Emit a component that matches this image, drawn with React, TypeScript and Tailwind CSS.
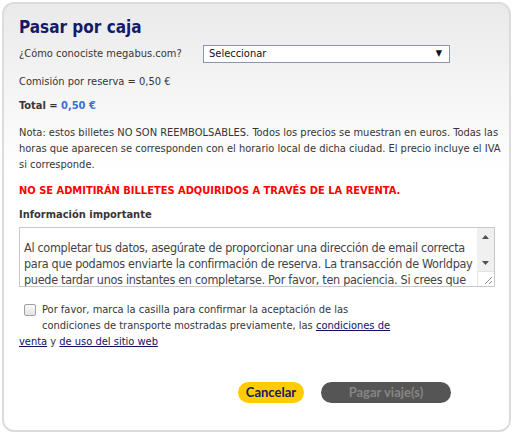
import React from "react";

export default function App() {
  return (
    <div className="w-[513px] h-[434px] bg-white p-[2px] font-['DejaVu_Sans_Condensed','DejaVu_Sans',sans-serif] font-stretch-condensed text-[11px] text-[#363636]">
      <div className="relative w-[509px] h-[430px] rounded-[12px] border-2 border-[#dcdcdc] bg-gradient-to-b from-[#eaeaea] via-white via-40% to-white overflow-hidden flex flex-col">
        <div className="flex flex-col px-[15px] pt-[13px]">
          <h1 className="text-[17px] font-bold text-[#141a66] leading-[20px]">Pasar por caja</h1>
          <div className="flex items-center mt-[8px] h-[18px]">
            <span className="w-[184px]">¿Cómo conociste megabus.com?</span>
            <div className="w-[247px] h-[18px] border border-[#8a93b0] bg-white flex items-center justify-between pl-[5px] pr-[7px] text-[#111]">
              <span>Seleccionar</span>
              <span className="text-[9px]">▼</span>
            </div>
          </div>
          <p className="mt-[11px] leading-[16px]">Comisión por reserva = 0,50 €</p>
          <p className="mt-[8px] leading-[16px] font-bold">
            Total = <span className="text-[#3a6fd8]">0,50 €</span>
          </p>
          <p className="mt-[11px] leading-[16px] whitespace-nowrap">
            Nota: estos billetes NO SON REEMBOLSABLES. Todos los precios se muestran en euros. Todas las
            <br />
            horas que aparecen se corresponden con el horario local de dicha ciudad. El precio incluye el IVA
            <br />
            si corresponde.
          </p>
          <p className="mt-[10px] leading-[16px] font-bold text-[#ff0000]">
            NO SE ADMITIRÁN BILLETES ADQUIRIDOS A TRAVÉS DE LA REVENTA.
          </p>
          <p className="mt-[8px] leading-[16px] font-bold">Información importante</p>
          <div className="mt-[4px] w-[476px] h-[60px] border border-[#c8c8c8] bg-white flex">
            <div className="flex-1 overflow-hidden pl-[4px] pt-[12px] text-[12.5px] tracking-[-0.3px] leading-[16px] text-[#444] whitespace-nowrap">
              Al completar tus datos, asegúrate de proporcionar una dirección de email correcta
              <br />
              para que podamos enviarte la confirmación de reserva. La transacción de Worldpay
              <br />
              puede tardar unos instantes en completarse. Por favor, ten paciencia. Si crees que
              <br />
              tienes algún problema, ponte en contacto con nuestro servicio de atención al cliente.
            </div>
            <div className="w-[17px] flex flex-col">
              <div className="bg-[#f0f0f0] flex flex-col">
                <div className="h-[17px] flex items-center justify-center">
                  <svg width="7" height="4" viewBox="0 0 7 4"><path d="M0 4 L3.5 0 L7 4Z" fill="#505050" /></svg>
                </div>
                <div className="h-[9px]" />
                <div className="h-[17px] flex items-center justify-center">
                  <svg width="7" height="4" viewBox="0 0 7 4"><path d="M0 0 L3.5 4 L7 0Z" fill="#505050" /></svg>
                </div>
              </div>
              <div className="flex-1 bg-white border-l border-t border-[#e4e4e4] flex items-end justify-end p-[2px]">
                <svg width="8" height="8" viewBox="0 0 8 8">
                  <path d="M8 1 L1 8 M8 5 L5 8" stroke="#8a8a8a" strokeWidth="1" />
                </svg>
              </div>
            </div>
          </div>
          <div className="mt-[15px] flex">
            <div className="w-[23px] pl-[5px] pt-[2px]">
              <div className="w-[12px] h-[12px] rounded-[2px] border border-[#a0a0a0] bg-gradient-to-b from-[#fafafa] to-[#e4e4e4]" />
            </div>
            <p className="leading-[16px]">
              Por favor, marca la casilla para confirmar la aceptación de las
              <br />
              condiciones de transporte mostradas previamente, las{" "}
              <span className="underline text-[#10106a]">condiciones de</span>
            </p>
          </div>
          <p className="leading-[16px]">
            <span className="underline text-[#10106a]">venta</span> y{" "}
            <span className="underline text-[#10106a]">de uso del sitio web</span>
          </p>
          <div className="mt-[32px] flex justify-end gap-[17px] pr-[43px] font-['Lato',sans-serif] font-stretch-normal">
            <button className="h-[21px] w-[66px] rounded-full bg-[#ffcc00] text-[#141a66] font-bold text-[13px] leading-[21px]">Cancelar</button>
            <button className="h-[21px] w-[130px] rounded-full bg-[#555555] text-[#858585] font-bold text-[13px] leading-[21px]">Pagar viaje(s)</button>
          </div>
        </div>
      </div>
    </div>
  );
}
